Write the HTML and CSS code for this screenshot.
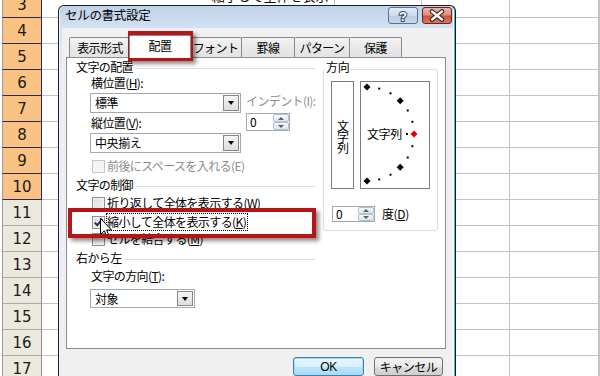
FILE: index.html
```html
<!DOCTYPE html>
<html lang="ja">
<head>
<meta charset="utf-8">
<title>セルの書式設定</title>
<link rel="stylesheet" href="styles.css">
</head>
<body>
<div class="sheet">
  <div class="row sel"><div class="rh">3</div><div class="c ca top"><span class="toptext">縮小して全体を表示</span></div><div class="c cb"></div><div class="c cc"></div><div class="c cd"></div><div class="c ce"></div></div>
  <div class="row sel"><div class="rh">4</div><div class="c ca"></div><div class="c cb"></div><div class="c cc"></div><div class="c cd"></div><div class="c ce"></div></div>
  <div class="row sel"><div class="rh">5</div><div class="c ca"></div><div class="c cb"></div><div class="c cc"></div><div class="c cd"></div><div class="c ce"></div></div>
  <div class="row sel"><div class="rh">6</div><div class="c ca"></div><div class="c cb"></div><div class="c cc"></div><div class="c cd"></div><div class="c ce"></div></div>
  <div class="row sel"><div class="rh">7</div><div class="c ca"></div><div class="c cb"></div><div class="c cc"></div><div class="c cd"></div><div class="c ce"></div></div>
  <div class="row sel"><div class="rh">8</div><div class="c ca"></div><div class="c cb"></div><div class="c cc"></div><div class="c cd"></div><div class="c ce"></div></div>
  <div class="row sel"><div class="rh">9</div><div class="c ca"></div><div class="c cb"></div><div class="c cc"></div><div class="c cd"></div><div class="c ce"></div></div>
  <div class="row sel"><div class="rh">10</div><div class="c ca"></div><div class="c cb"></div><div class="c cc"></div><div class="c cd"></div><div class="c ce"></div></div>
  <div class="row"><div class="rh">11</div><div class="c ca"></div><div class="c cb"></div><div class="c cc"></div><div class="c cd"></div><div class="c ce"></div></div>
  <div class="row"><div class="rh">12</div><div class="c ca"></div><div class="c cb"></div><div class="c cc"></div><div class="c cd"></div><div class="c ce"></div></div>
  <div class="row"><div class="rh">13</div><div class="c ca"></div><div class="c cb"></div><div class="c cc"></div><div class="c cd"></div><div class="c ce"></div></div>
  <div class="row"><div class="rh">14</div><div class="c ca"></div><div class="c cb"></div><div class="c cc"></div><div class="c cd"></div><div class="c ce"></div></div>
  <div class="row"><div class="rh">15</div><div class="c ca"></div><div class="c cb"></div><div class="c cc"></div><div class="c cd"></div><div class="c ce"></div></div>
  <div class="row"><div class="rh">16</div><div class="c ca"></div><div class="c cb"></div><div class="c cc"></div><div class="c cd"></div><div class="c ce"></div></div>
  <div class="row"><div class="rh">17</div><div class="c ca"></div><div class="c cb"></div><div class="c cc"></div><div class="c cd"></div><div class="c ce"></div></div>
</div>

<div class="dlg">
  <div class="titlebar">
    <span class="title">セルの書式設定</span>
    <div class="tbtns">
      <span class="tb help"><svg width="28" height="15" viewBox="0 0 28 15"><text x="14" y="12.5" text-anchor="middle" class="qmark">?</text></svg></span>
      <span class="tb close"><svg width="28" height="15" viewBox="0 0 28 15"><path d="M9 3.5L19 11.5M19 3.5L9 11.5" stroke="#3a1a18" stroke-width="4.6" stroke-linecap="round"/><path d="M9 3.5L19 11.5M19 3.5L9 11.5" stroke="#ffffff" stroke-width="2.4" stroke-linecap="round"/></svg></span>
    </div>
  </div>
  <div class="client">
    <div class="tabs">
      <div class="tab t1">表示形式</div>
      <div class="tab t2 active">配置</div>
      <div class="tab t3">フォント</div>
      <div class="tab t4">罫線</div>
      <div class="tab t5">パターン</div>
      <div class="tab t6">保護</div>
    </div>
    <div class="panel">
      <div class="lcol">
        <div class="glabel g1"><span>文字の配置</span></div>
        <div class="halign">
          <div class="hcol1">
            <div class="lbl m2">横位置(<u>H</u>):</div>
            <div class="combo cw m3"><span class="ctext">標準</span><span class="dd"></span></div>
            <div class="lbl m3">縦位置(<u>V</u>):</div>
            <div class="combo cw m3"><span class="ctext">中央揃え</span><span class="dd"></span></div>
          </div>
          <div class="hcol2">
            <div class="lbl dis m20">インデント(I):</div>
            <div class="spin sw1"><span class="stext">0</span><span class="sbtns"><span class="sb up"></span><span class="sb dn"></span></span></div>
          </div>
        </div>
        <div class="chk c0"><span class="box disabled"></span><span class="dis">前後にスペースを入れる(E)</span></div>
        <div class="glabel g2"><span>文字の制御</span></div>
        <div class="chk c1"><span class="box"></span><span>折り返して全体を表示する(W)</span></div>
        <div class="chk c2"><span class="box"><svg width="11" height="11" viewBox="0 0 11 11"><path d="M1.8 5.6L4.3 8.3L9.3 1.8" fill="none" stroke="#1c2d66" stroke-width="2"/></svg></span><span class="focus">縮小して全体を表示する(<u>K</u>)</span></div>
        <div class="chk c3"><span class="box"></span><span>セルを結合する(<u>M</u>)</span></div>
        <div class="glabel g3"><span>右から左</span></div>
        <div class="lbl dirlbl">文字の方向(<u>T</u>):</div>
        <div class="combo cw2"><span class="ctext">対象</span><span class="dd"></span></div>
      </div>
      <div class="dir">
        <span class="dirtitle">方向</span>
        <div class="dirboxes">
          <div class="vbox"><span class="vtext">文字列</span></div>
          <div class="sbox">
            <svg width="68" height="106" viewBox="0 0 68 106">
              <polygon points="6,1.5 9.5,5 6,8.5 2.5,5" fill="#000"/>
              <rect x="17.2" y="5.6" width="2" height="2" fill="#000"/>
              <rect x="28.5" y="10.3" width="2" height="2" fill="#000"/>
              <polygon points="39.2,15.3 42.7,18.8 39.2,22.3 35.7,18.8" fill="#000"/>
              <rect x="45.7" y="27.5" width="2" height="2" fill="#000"/>
              <rect x="50.4" y="38.8" width="2" height="2" fill="#000"/>
              <rect x="45" y="51" width="2" height="2" fill="#000"/>
              <polygon points="53,48.5 56.5,52 53,55.5 49.5,52" fill="#e00000"/>
              <rect x="50.4" y="63.2" width="2" height="2" fill="#000"/>
              <rect x="45.7" y="74.5" width="2" height="2" fill="#000"/>
              <polygon points="39.2,81.7 42.7,85.2 39.2,88.7 35.7,85.2" fill="#000"/>
              <rect x="28.5" y="91.7" width="2" height="2" fill="#000"/>
              <rect x="17.2" y="96.4" width="2" height="2" fill="#000"/>
              <polygon points="6,95.5 9.5,99 6,102.5 2.5,99" fill="#000"/>
              <text x="6" y="56.5" class="svtext">文字列</text>
            </svg>
          </div>
        </div>
        <div class="degrow">
          <div class="spin sw2"><span class="stext">0</span><span class="sbtns"><span class="sb up"></span><span class="sb dn"></span></span></div>
          <span class="deg">度(<u>D</u>)</span>
        </div>
      </div>
    </div>
    <div class="btnrow">
      <span class="btn ok">OK</span>
      <span class="btn cancel">キャンセル</span>
    </div>
  </div>
</div>

<svg class="cursor" width="13" height="20" viewBox="0 0 13 20"><path d="M0.5 0.5L0.5 16.5L4.3 12.8L6.8 18.6L9 17.6L6.6 12L11.6 12Z" fill="#fff" stroke="#000" stroke-width="1"/></svg>
<div class="mark mark1"></div>
<div class="mark mark2"></div>
</body>
</html>
```

FILE: styles.css
```css
html, body {
  margin: 0;
  padding: 0;
  width: 600px;
  height: 376px;
  overflow: hidden;
  background: #fff;
}
body {
  position: relative;
  font-family: "Noto Sans CJK JP", "Noto Sans", sans-serif;
  font-size: 12px;
  color: #000;
}

/* ---------- spreadsheet ---------- */
.sheet { margin-top: -8px; }
.row { display: flex; height: 26px; }
.rh {
  box-sizing: border-box;
  width: 40px;
  height: 26px;
  margin-left: 2px;
  border-left: 1px solid #9c9c9c;
  border-right: 1px solid #8e8e8e;
  border-bottom: 1px solid #a9a9a9;
  background: #ebe9de;
  font: 15px "DejaVu Sans", sans-serif;
  color: #1a1a1a;
  display: flex;
  align-items: center;
  justify-content: center;
  padding-top: 1px;
}
.row.sel .rh {
  background: #fac383;
  border-right-color: #26295c;
  border-bottom-color: #26295c;
}
.c {
  box-sizing: border-box;
  height: 26px;
  border-right: 1px solid #c3c3c3;
  border-bottom: 1px solid #c3c3c3;
}
.ca { width: 294px; }
.cb { width: 87px; }
.cc { width: 88px; }
.cd { width: 89px; }
.ce { flex: 1; }
.top {
  display: flex;
  justify-content: flex-end;
  align-items: flex-end;
  padding: 0 6px 14px 0;
}
.toptext { font-size: 13px; line-height: 14px; }

/* ---------- dialog ---------- */
.dlg {
  position: absolute;
  left: 58px;
  top: 5px;
  width: 398px;
  height: 380px;
  box-sizing: border-box;
  border: 1px solid #1d1d1d;
  border-bottom: none;
  border-radius: 6px 6px 0 0;
  background: linear-gradient(#bfd2e9, #d3e1f1 22px, #e3ebf5 60px, #e8eef6);
  box-shadow: inset -1px 0 #38b6e3, inset -2px 0 #f6f9fc, inset 1px 0 #f3f6fa;
}
.titlebar {
  height: 22px;
  display: flex;
  align-items: flex-start;
  padding-left: 6px;
}
.title {
  margin-top: 2px;
  font-size: 12.5px;
  line-height: 14px;
  letter-spacing: -0.3px;
}
.tbtns {
  margin-left: auto;
  margin-right: 3px;
  margin-top: 1px;
  display: flex;
  gap: 4px;
}
.tb {
  box-sizing: border-box;
  width: 30px;
  height: 17px;
  border-radius: 3px;
  display: flex;
}
.help {
  border: 1px solid #5f7189;
  background: linear-gradient(#e3ecf7, #cbdaec 50%, #b8cce4 51%, #c6d7eb);
}
.close {
  border: 1px solid #672422;
  background: linear-gradient(#ebb5a9, #de9180 45%, #c9543d 55%, #d57960);
}
.qmark {
  font: bold 13px "Liberation Sans", sans-serif;
  fill: #fff;
  stroke: #34465e;
  stroke-width: 2px;
  paint-order: stroke;
}
.client {
  margin: 0 2px 0 3px;
  padding: 9px 0 0 4px;
  background: #f0f0f0;
  height: 360px;
}

/* tabs */
.tabs {
  display: flex;
  align-items: flex-end;
  height: 20px;
  padding-left: 3px;
}
.tab {
  box-sizing: border-box;
  height: 20px;
  border: 1px solid #898c95;
  border-bottom: none;
  border-radius: 2px 2px 0 0;
  background: linear-gradient(#f3f3f3, #e9e9e9 50%, #e3e3e3);
  display: flex;
  align-items: center;
  justify-content: center;
  font-size: 12px;
  letter-spacing: -0.6px;
  line-height: 14px;
}
.t1 { width: 62px; }
.t2 {
  width: 62px;
  height: 23px;
  margin: 0 -2px -1px -2px;
  background: #fff;
  position: relative;
  z-index: 1;
  padding-bottom: 2px;
}
.t3 { width: 53px; }
.t4 { width: 54px; margin-left: -1px; }
.t5 { width: 56px; margin-left: -1px; }
.t6 { width: 53px; margin-left: -1px; }

/* panel */
.panel {
  box-sizing: border-box;
  width: 380px;
  height: 292px;
  border: 1px solid #898c95;
  background: #fff;
  display: flex;
  align-items: flex-start;
  padding-left: 9px;
}
.lcol { width: 239px; }
.lbl, .glabel, .chk {
  height: 14px;
  line-height: 14px;
  font-size: 12px;
  letter-spacing: -0.6px;
  white-space: nowrap;
}
.glabel { display: flex; align-items: center; }
.glabel::after {
  content: "";
  flex: 1;
  height: 1px;
  margin: 2px 0 0 3px;
  background: #d5dfe5;
}
.g1 { margin-top: 2px; }
.g2 { margin-top: 5px; }
.g3 { margin-top: 5px; }
.m2 { margin-top: 2px; }
.m3 { margin-top: 3px; }
.m20 { margin-top: 20px; }
.dis { color: #8d8d8d; }

.halign { display: flex; margin-left: 14px; }
.hcol1 { width: 151px; }
.hcol1 .lbl { padding-left: 1px; }
.hcol2 { margin-left: 5px; }

.combo {
  box-sizing: border-box;
  display: flex;
  border: 1px solid #a3a9b1;
  background: #fff;
}
.cw { width: 151px; height: 20px; }
.cw2 { width: 105px; height: 19px; margin: 6px 0 0 14px; }
.ctext {
  flex: 1;
  padding-left: 4px;
  font-size: 12px;
  letter-spacing: -0.4px;
  line-height: 18px;
}
.cw2 .ctext { line-height: 17px; }
.dd {
  box-sizing: border-box;
  width: 16px;
  margin: 1px;
  border: 1px solid #868686;
  background: linear-gradient(#f5f5f5, #dedede);
  display: flex;
  align-items: center;
  justify-content: center;
}
.dd::after {
  content: "";
  border-left: 3.5px solid transparent;
  border-right: 3.5px solid transparent;
  border-top: 4px solid #000;
}

.spin {
  box-sizing: border-box;
  display: flex;
  border: 1px solid #a3a9b1;
  background: #fff;
}
.sw1 { width: 44px; height: 18px; margin-top: 5px; }
.sw2 { width: 43px; height: 16px; margin-left: 1px; }
.stext {
  flex: 1;
  padding-left: 3px;
  font-size: 12px;
  line-height: 16px;
}
.sw2 .stext { line-height: 14px; }
.sbtns {
  display: flex;
  flex-direction: column;
  width: 16px;
}
.sb {
  flex: 1;
  box-sizing: border-box;
  border: 1px solid #b3c0cf;
  border-radius: 2px;
  background: linear-gradient(#f7f9fc, #dfe6ee);
  display: flex;
  align-items: center;
  justify-content: center;
}
.sb.up::after {
  content: "";
  border-left: 3px solid transparent;
  border-right: 3px solid transparent;
  border-bottom: 3px solid #4d607a;
}
.sb.dn::after {
  content: "";
  border-left: 3px solid transparent;
  border-right: 3px solid transparent;
  border-top: 3px solid #4d607a;
}

.chk {
  display: flex;
  align-items: center;
  gap: 2px;
  margin-left: 16px;
}
.c0 { margin-top: 6px; }
.c1 { margin-top: 4px; }
.c2 { margin-top: 5px; }
.c3 { margin-top: 3px; }
.box {
  box-sizing: border-box;
  width: 13px;
  height: 13px;
  border: 1px solid #8e8f8f;
  background: linear-gradient(135deg, #dadada, #f8f8f8);
  box-shadow: inset 0 0 0 1px #f4f4f4;
  display: flex;
  flex: none;
}
.box.disabled {
  border-color: #c8c8c8;
  background: #f4f4f4;
  box-shadow: none;
}
.focus {
  border: 1px dotted #000;
  padding: 1px 1px 1px 0;
  margin-left: -1px;
  line-height: 14px;
}
.dirlbl { margin: 4px 0 0 15px; }

/* direction group */
.dir {
  position: relative;
  box-sizing: border-box;
  width: 115px;
  height: 162px;
  margin: 11px 0 0 8px;
  border: 1px solid #d5dfe5;
  border-radius: 3px;
  padding: 11px 7px 0 7px;
}
.dirtitle {
  position: absolute;
  top: -10px;
  left: 1px;
  padding: 0 1px;
  background: #fff;
  font-size: 12px;
  line-height: 14px;
  letter-spacing: -0.3px;
}
.dirboxes { display: flex; gap: 6px; }
.vbox, .sbox {
  box-sizing: border-box;
  height: 108px;
  border: 1px solid #7d7d7d;
  background: #fff;
}
.vbox {
  width: 23px;
  display: flex;
  align-items: center;
  justify-content: center;
}
.vtext {
  writing-mode: vertical-rl;
  font-size: 12px;
  letter-spacing: -1px;
  line-height: 14px;
  margin-top: 2px;
}
.sbox { width: 70px; }
.sbox svg { display: block; }
.svtext {
  font-family: "Noto Sans CJK JP", sans-serif;
  font-size: 12px;
  letter-spacing: -0.4px;
  fill: #000;
}
.degrow {
  display: flex;
  align-items: center;
  margin-top: 17px;
}
.deg {
  margin-left: 7px;
  font-size: 12px;
  line-height: 14px;
  letter-spacing: -0.4px;
}

/* buttons */
.btnrow {
  width: 380px;
  display: flex;
  justify-content: flex-end;
  gap: 10px;
  margin-top: 8px;
}
.btn {
  box-sizing: border-box;
  height: 19px;
  border-radius: 3px;
  display: flex;
  align-items: center;
  justify-content: center;
  font-size: 12px;
  letter-spacing: -0.5px;
  line-height: 14px;
}
.ok {
  width: 71px;
  border: 1px solid #3c7fb1;
  background: linear-gradient(#eaf6fd, #d9f0fc 50%, #bee6fd 51%, #a7d9f5);
  box-shadow: inset 0 0 0 1px #a6dcf7;
  font-family: "Liberation Sans", sans-serif;
}
.cancel {
  width: 69px;
  margin-right: 3px;
  border: 1px solid #707070;
  background: linear-gradient(#f2f2f2, #ebebeb 50%, #dddddd 51%, #cfcfcf);
}

/* overlays */
.cursor {
  position: absolute;
  left: 100px;
  top: 218px;
}
.mark {
  position: absolute;
  box-sizing: border-box;
  border: 4px solid #b61515;
  box-shadow: 3px 3px 4px rgba(0, 0, 0, 0.45);
}
.mark1 { left: 128px; top: 31px; width: 65px; height: 30px; }
.mark2 { left: 68px; top: 208px; width: 248px; height: 30px; }
```
